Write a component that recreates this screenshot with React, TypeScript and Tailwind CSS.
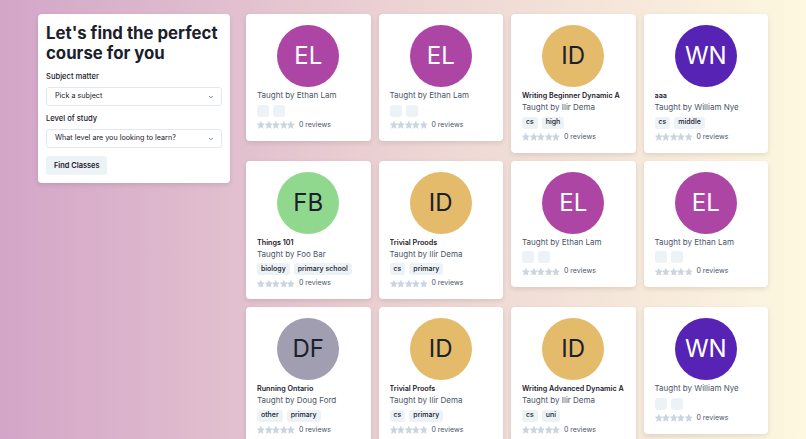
import { ChevronDown } from 'lucide-react'

type Course = {
  initials: string
  color: string
  light: boolean
  title?: string
  teacher: string
  tags: string[]
}

const courses: Course[] = [
  { initials: 'EL', color: '#ad45a5', light: true, teacher: 'Ethan Lam', tags: ['', ''] },
  { initials: 'EL', color: '#ad45a5', light: true, teacher: 'Ethan Lam', tags: ['', ''] },
  { initials: 'ID', color: '#e3bb6b', light: false, title: 'Writing Beginner Dynamic A', teacher: 'Ilir Dema', tags: ['cs', 'high'] },
  { initials: 'WN', color: '#5723b5', light: true, title: 'aaa', teacher: 'William Nye', tags: ['cs', 'middle'] },
  { initials: 'FB', color: '#8fd88e', light: false, title: 'Things 101', teacher: 'Foo Bar', tags: ['biology', 'primary school'] },
  { initials: 'ID', color: '#e3bb6b', light: false, title: 'Trivial Proods', teacher: 'Ilir Dema', tags: ['cs', 'primary'] },
  { initials: 'EL', color: '#ad45a5', light: true, teacher: 'Ethan Lam', tags: ['', ''] },
  { initials: 'EL', color: '#ad45a5', light: true, teacher: 'Ethan Lam', tags: ['', ''] },
  { initials: 'DF', color: '#a09eb0', light: false, title: 'Running Ontario', teacher: 'Doug Ford', tags: ['other', 'primary'] },
  { initials: 'ID', color: '#e3bb6b', light: false, title: 'Trivial Proofs', teacher: 'Ilir Dema', tags: ['cs', 'primary'] },
  { initials: 'ID', color: '#e3bb6b', light: false, title: 'Writing Advanced Dynamic A', teacher: 'Ilir Dema', tags: ['cs', 'uni'] },
  { initials: 'WN', color: '#5723b5', light: true, teacher: 'William Nye', tags: ['', ''] },
]

const Star = () => (
  <svg viewBox="0 0 24 24" className="w-[7.6px] h-[7.6px]" fill="#cbd5e0">
    <path d="M23.555,8.729a1.505,1.505,0,0,0-1.406-.98H16.062a.5.5,0,0,1-.472-.334L13.405,1.222a1.5,1.5,0,0,0-2.81,0l-.005.016L8.41,7.415a.5.5,0,0,1-.471.334H1.85A1.5,1.5,0,0,0,.887,10.4l5.184,4.3a.5.5,0,0,1,.155.543L4.048,21.774a1.5,1.5,0,0,0,2.31,1.684l5.346-3.92a.5.5,0,0,1,.591,0l5.344,3.919a1.5,1.5,0,0,0,2.312-1.683l-2.178-6.535a.5.5,0,0,1,.155-.543l5.194-4.306A1.5,1.5,0,0,0,23.555,8.729Z" />
  </svg>
)

const CourseCard = ({ course }: { course: Course }) => (
  <div className="bg-white rounded-[4px] shadow-[0_2px_5px_rgba(0,0,0,0.1)] p-[11px]">
    <div
      className={`w-[62px] h-[62px] mx-auto rounded-full flex items-center justify-center text-[24px] ${
        course.light ? 'text-white' : 'text-[#1a202c]'
      }`}
      style={{ backgroundColor: course.color }}
    >
      {course.initials}
    </div>
    <div className="mt-[3px]">
      {course.title && (
        <p className="text-[7.2px] leading-[12px] font-semibold text-[#1a202c] whitespace-nowrap overflow-hidden">
          {course.title}
        </p>
      )}
      <p className="text-[8px] leading-[10.5px] text-[#4a5568]">Taught by {course.teacher}</p>
    </div>
    <div className="flex gap-1 mt-1">
      {course.tags.map((tag, i) => (
        <span
          key={i}
          className="h-[12px] min-w-[12px] px-1 rounded-[3px] bg-[#edf2f7] text-[7px] font-medium text-[#1a202c] flex items-center"
        >
          {tag}
        </span>
      ))}
    </div>
    <div className="flex items-center mt-1 h-[9px]">
      <Star />
      <Star />
      <Star />
      <Star />
      <Star />
      <span className="ml-1 text-[7px] text-[#4a5568]">0 reviews</span>
    </div>
  </div>
)

const SelectBox = ({ placeholder }: { placeholder: string }) => (
  <div className="h-[19px] border border-[#e2e8f0] rounded-[3px] flex items-center justify-between pl-2 pr-[7px] text-[7.2px] text-[#1a202c]">
    <span>{placeholder}</span>
    <ChevronDown size={6} strokeWidth={3} className="text-[#4a5568]" />
  </div>
)

export default function App() {
  return (
    <div
      className="h-screen overflow-hidden bg-linear-to-r from-[#d3a5c8] via-[#ecd3d3] to-[#fdf8df] px-[38px] pt-[14px] flex gap-4 items-start"
      style={{ fontFamily: 'Inter, "Noto Sans", sans-serif' }}
    >
      <div className="w-[192px] shrink-0 bg-white rounded-[4px] shadow-[0_2px_5px_rgba(0,0,0,0.1)] px-2 pt-[9px] pb-2">
        <h1 className="text-[16.8px] leading-[20px] font-bold text-[#1a202c]">Let's find the perfect course for you</h1>
        <div className="mt-2">
          <label className="block text-[7.6px] leading-[12px] font-medium text-[#1a202c] mb-1">Subject matter</label>
          <SelectBox placeholder="Pick a subject" />
        </div>
        <div className="mt-[7px]">
          <label className="block text-[7.6px] leading-[12px] font-medium text-[#1a202c] mb-1">Level of study</label>
          <SelectBox placeholder="What level are you looking to learn?" />
        </div>
        <button className="mt-2 h-[19px] px-2 rounded-[3px] bg-[#edf2f7] text-[7.4px] font-semibold text-[#1a202c]">
          Find Classes
        </button>
      </div>
      <div className="flex-1 grid grid-cols-4 gap-2 items-start">
        {courses.map((c, i) => (
          <CourseCard key={i} course={c} />
        ))}
      </div>
    </div>
  )
}
